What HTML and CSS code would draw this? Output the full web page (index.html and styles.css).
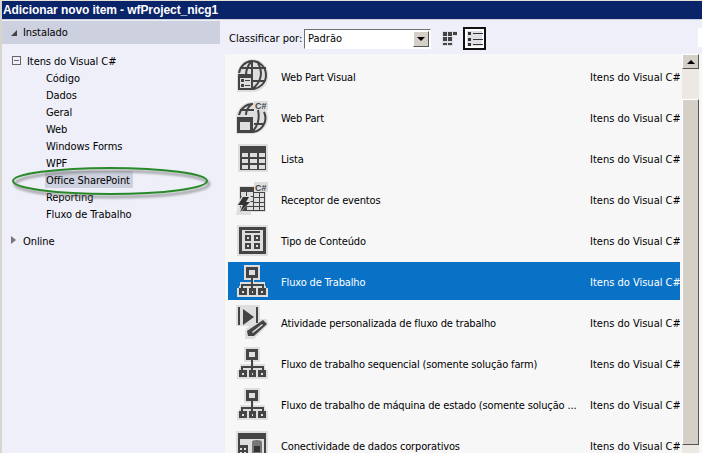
FILE: index.html
```html
<!DOCTYPE html>
<html lang="en">
<head>
    <meta charset="UTF-8">
    <meta name="viewport" content="width=device-width, initial-scale=1.0">
    <title>Adicionar novo item</title>
    <link rel="stylesheet" href="styles.css">
</head>
<body>
    <svg class="defs" width="0" height="0">
        <defs>
            <g id="flow">
                <path d="M10 1h16v15h-6v2h11v4h1v2h2v9H3v-9h2v-2h1v-4h12v-2h-8z" fill="#dedede"/>
                <path d="M12 3h12v11H12zM15 6v5h6V6zM17 14h2v6h-2zM7 20h23v2H7zM7 22h2v2H7zM17 22h2v2h-2zM28 22h2v2h-2zM5 24h8v7H5zM15 24h7v7h-7zM24 24h8v7h-8z" fill="#444" fill-rule="evenodd"/>
                <path d="M8 27h2v2H8zM18 27h1v2h-1zM27 27h2v2h-2z" fill="#dedede"/>
            </g>
        </defs>
    </svg>

    <div class="window">
        <div class="titlebar">Adicionar novo item - wfProject_nicg1</div>
        <div class="panes">
            <aside class="tree">
                <div class="tree-head"><span class="arrow-open"></span>Instalado</div>
                <div class="tree-root"><span class="minus"></span>Itens do Visual C#</div>
                <ul class="tree-items">
                    <li>Código</li>
                    <li>Dados</li>
                    <li>Geral</li>
                    <li>Web</li>
                    <li>Windows Forms</li>
                    <li>WPF</li>
                    <li class="current"><span>Office SharePoint</span></li>
                    <li>Reporting</li>
                    <li>Fluxo de Trabalho</li>
                </ul>
                <div class="tree-online"><span class="arrow-closed"></span>Online</div>
                <svg class="ring" width="204" height="36" viewBox="0 0 204 36">
                    <ellipse class="ring-shadow" cx="100" cy="19" rx="97" ry="13" fill="none" stroke="#666" stroke-opacity=".5" stroke-width="3"/>
                    <ellipse cx="98" cy="16" rx="97" ry="13" fill="none" stroke="#2a8a2a" stroke-width="2"/>
                </svg>
            </aside>
            <main class="content">
                <div class="toolbar">
                    <label class="sort-label">Classificar por:</label>
                    <div class="combo"><span class="combo-text">Padrão</span><span class="combo-btn"></span></div>
                    <svg class="view-icon" width="15" height="15" viewBox="0 0 15 15">
                        <path d="M0 0h15v5h-4v10H0z" fill="#dfdfe6"/>
                        <path d="M1 1h4v4H1zM6 1h4v4H6zM11 1h4v3h-4zM1 6h4v4H1zM6 6h4v4H6zM1 12h4v2H1zM6 12h4v2H6z" fill="#444"/>
                    </svg>
                    <div class="view-active">
                        <svg width="19" height="19" viewBox="0 0 19 19">
                            <path d="M2 2h15v15H2z" fill="#dfdfe6"/>
                            <path d="M3 3h3v3H3zM8 4h10v1H8zM3 9h3v3H3zM8 10h10v1H8zM3 14h3v3H3zM8 15h10v1H8z" fill="#333"/>
                        </svg>
                    </div>
                </div>
                <div class="list-wrap">
                    <div class="list">
                        <div class="row">
                            <svg class="icon" viewBox="0 0 34 34">
                                <path d="M18 0a16.500 16.500 0 1 1 0 33H3V16A16 16 0 0 1 18 0z" fill="#dedede"/>
                                <path d="M18 2a14 14 0 1 1 0 28M5 14A14 14 0 0 1 18 2M6 9h26M18 22h13M18 2c-4 4-6 9-6 14M18 2v20M24 4c5 8 4 19-6 26" fill="none" stroke="#444" stroke-width="2"/>
                                <path d="M4 15h15v16H4z" fill="#444"/>
                                <path d="M6 19h11v10H6z" fill="#dedede"/>
                                <path d="M7 20h3v3H7zM7 25h3v3H7zM11 21h5v1h-5zM11 26h5v1h-5z" fill="#444"/>
                            </svg>
                            <span class="name">Web Part Visual</span><span class="cat">Itens do Visual C#</span>
                        </div>
                        <div class="row">
                            <svg class="icon" viewBox="0 0 34 34">
                                <path d="M18 2a16 16 0 0 1 0 32H2V18A16 16 0 0 1 18 2zM20 1h14v9H20z" fill="#dedede"/>
                                <path d="M30 12a14 14 0 0 1-11 20M5 15A14 14 0 0 1 19 4M6 10h14M20 24h10M18 4c-4 3-6 7-6 11M24 10c2 9 0 16-6 22" fill="none" stroke="#444" stroke-width="2"/>
                                <path d="M3 17h16v16H3z" fill="#444"/>
                                <path d="M6 22h10v8H6z" fill="#dedede"/>
                                <text x="21" y="9" class="csharp">C#</text>
                            </svg>
                            <span class="name">Web Part</span><span class="cat">Itens do Visual C#</span>
                        </div>
                        <div class="row">
                            <svg class="icon" viewBox="0 0 34 34">
                                <path d="M4 3h30v28H4z" fill="#dedede"/>
                                <path d="M6 5h26v24H6z" fill="#444"/>
                                <path d="M8 12h6v4H8zM16 12h7v4h-7zM25 12h6v4h-6zM8 18h6v4H8zM16 18h7v4h-7zM25 18h6v4h-6zM8 24h6v4H8zM16 24h7v4h-7zM25 24h6v4h-6z" fill="#dedede"/>
                            </svg>
                            <span class="name">Lista</span><span class="cat">Itens do Visual C#</span>
                        </div>
                        <div class="row">
                            <svg class="icon" viewBox="0 0 34 34">
                                <path d="M5 4h15V0h14v10h-2v20H17v3H2l3-14z" fill="#dedede"/>
                                <path d="M6 5h14v5h11v19H6z" fill="#444"/>
                                <path d="M7 10h5v4H7zM13 10h6v4h-6zM20 11h5v4h-5zM26 11h4v4h-4zM13 15h6v4h-6zM20 16h5v4h-5zM26 16h4v4h-4zM13 20h6v4h-6zM20 21h5v3h-5zM26 21h4v3h-4zM13 25h6v3h-6zM20 25h5v3h-5zM26 25h4v3h-4z" fill="#dedede"/>
                                <path d="M8 14h9l-3 5h3L4 33l3-9H2z" fill="#dedede"/>
                                <path d="M9 15h6l-3 5h4L6 30l3-7H4z" fill="#333"/>
                                <text x="21" y="9" class="csharp">C#</text>
                            </svg>
                            <span class="name">Receptor de eventos</span><span class="cat">Itens do Visual C#</span>
                        </div>
                        <div class="row">
                            <svg class="icon" viewBox="0 0 34 34">
                                <path d="M3 2h31v31H3z" fill="#dedede"/>
                                <path d="M5 4h27v27H5zM8 7v21h21V7z" fill="#444" fill-rule="evenodd"/>
                                <path d="M11 8h15v2H11zM11 12h6v6h-6zM20 12h6v6h-6zM11 20h6v6h-6zM20 20h6v6h-6z" fill="#444"/>
                                <path d="M13 14h2v2h-2zM22 14h2v2h-2zM13 22h2v2h-2zM22 22h2v2h-2z" fill="#dedede"/>
                            </svg>
                            <span class="name">Tipo de Conteúdo</span><span class="cat">Itens do Visual C#</span>
                        </div>
                        <div class="row selected">
                            <svg class="icon" viewBox="0 0 34 34"><use href="#flow"/></svg>
                            <span class="name">Fluxo de Trabalho</span><span class="cat">Itens do Visual C#</span>
                        </div>
                        <div class="row">
                            <svg class="icon" viewBox="0 0 34 34">
                                <path d="M2 0h24v14h7l1 6-14 14h-9v-9l4-4H2z" fill="#dedede"/>
                                <path d="M4 2h2v18H4zM22 2h2v16h-2zM9 4l11 8-11 8z" fill="#444"/>
                                <path d="M29 15l4 4-13 12h-6l-1-5z" fill="#444"/>
                                <path d="M28 19l1 1-10 8-1-1z" fill="#dedede"/>
                            </svg>
                            <span class="name">Atividade personalizada de fluxo de trabalho</span><span class="cat">Itens do Visual C#</span>
                        </div>
                        <div class="row">
                            <svg class="icon" viewBox="0 0 34 34"><use href="#flow"/></svg>
                            <span class="name">Fluxo de trabalho sequencial (somente solução farm)</span><span class="cat">Itens do Visual C#</span>
                        </div>
                        <div class="row">
                            <svg class="icon" viewBox="0 0 34 34"><use href="#flow"/></svg>
                            <span class="name">Fluxo de trabalho de máquina de estado (somente solução ...</span><span class="cat">Itens do Visual C#</span>
                        </div>
                        <div class="row">
                            <svg class="icon" viewBox="0 0 34 34">
                                <path d="M2 3h32v31H2z" fill="#dedede"/>
                                <path d="M4 5h28v6H4zM4 11h2v6H4zM30 11h2v23h-2z" fill="#444"/>
                                <path d="M4 17h10v17H4z" fill="#444"/>
                                <path d="M6 20h2v2H6zM10 20h2v2h-2zM6 24h2v2H6zM10 24h2v2h-2z" fill="#dedede"/>
                                <path d="M18 14a5 2 0 0 1 10 0v20H18z" fill="#777"/>
                                <path d="M20 18h6v6h-6z" fill="#333"/>
                            </svg>
                            <span class="name">Conectividade de dados corporativos</span><span class="cat">Itens do Visual C#</span>
                        </div>
                    </div>
                    <div class="scrollbar">
                        <div class="scroll-btn"><span class="arrow-up"></span></div>
                        <div class="scroll-gap"></div>
                        <div class="scroll-thumb"></div>
                    </div>
                </div>
            </main>
        </div>
        <div class="corner-patch"></div>
    </div>
</body>
</html>
```

FILE: styles.css
```css
html, body {
    margin: 0;
    height: 100%;
}
body {
    font-family: "DejaVu Sans Condensed", "DejaVu Sans", sans-serif;
    font-stretch: condensed;
    font-size: 11px;
    color: #000;
    background-color: #eeeff8;
    overflow: hidden;
}
.defs {
    display: block;
    height: 0;
}
.window {
    height: 453px;
    border-top: 1px solid #e4e0d4;
    border-left: 2px solid #d8d5cc;
    box-sizing: border-box;
    display: flex;
    flex-direction: column;
    position: relative;
}
.titlebar {
    height: 18px;
    line-height: 18px;
    flex: none;
    background-color: #0a246a;
    color: white;
    font-family: "Liberation Sans", sans-serif;
    font-stretch: normal;
    font-weight: bold;
    font-size: 12px;
    letter-spacing: -0.08px;
    padding-left: 1px;
    border-bottom: 1px solid #cfd2de;
}
.panes {
    flex: 1;
    display: flex;
    min-height: 0;
}

/* left tree */
.tree {
    width: 218px;
    flex: none;
    position: relative;
    letter-spacing: -0.08px;
}
.tree-head {
    margin-top: 1px;
    height: 23px;
    line-height: 24px;
    background-color: #cdd0de;
    padding-left: 21px;
    position: relative;
}
.arrow-open {
    position: absolute;
    left: 9px;
    top: 9px;
    width: 0;
    height: 0;
    border-left: 6px solid transparent;
    border-bottom: 6px solid #444;
}
.tree-root {
    margin-top: 8px;
    height: 17px;
    line-height: 19px;
    padding-left: 25px;
    position: relative;
}
.minus {
    position: absolute;
    left: 10px;
    top: 4px;
    width: 7px;
    height: 7px;
    border: 1px solid #666;
    background: linear-gradient(#666, #666) center / 5px 1px no-repeat;
}
.tree-items {
    list-style: none;
    margin: 0;
    padding: 0 0 0 44px;
}
.tree-items li {
    height: 17px;
    line-height: 19px;
}
.tree-items .current span {
    display: inline-block;
    height: 17px;
    background-color: #cdd0de;
    padding: 0 3px 0 1px;
    margin-left: -1px;
}
.tree-online {
    margin-top: 10px;
    height: 17px;
    line-height: 19px;
    padding-left: 21px;
    position: relative;
}
.arrow-closed {
    position: absolute;
    left: 9px;
    top: 4px;
    width: 0;
    height: 0;
    border-top: 4px solid transparent;
    border-bottom: 4px solid transparent;
    border-left: 5px solid #777;
}
.ring {
    position: absolute;
    left: 10px;
    top: 145px;
}
.ring-shadow {
    filter: blur(1px);
}

/* right side */
.content {
    flex: 1;
    min-width: 0;
    display: flex;
    flex-direction: column;
}
.toolbar {
    height: 34px;
    flex: none;
    display: flex;
    align-items: center;
    padding-left: 9px;
    padding-top: 3px;
    box-sizing: border-box;
}
.sort-label {
    width: 75px;
    white-space: nowrap;
}
.combo {
    width: 127px;
    height: 20px;
    background-color: white;
    border: 1px solid;
    border-color: #6f6f6f #fff #fff #6f6f6f;
    box-sizing: border-box;
    display: flex;
    align-items: center;
    justify-content: space-between;
    padding: 1px;
}
.combo-text {
    padding-left: 2px;
}
.combo-btn {
    width: 16px;
    height: 16px;
    background-color: #d4d0c8;
    border: 1px solid;
    border-color: #fff #555 #555 #fff;
    box-sizing: border-box;
    position: relative;
}
.combo-btn::after {
    content: "";
    position: absolute;
    left: 3px;
    top: 5px;
    border-left: 4px solid transparent;
    border-right: 4px solid transparent;
    border-top: 4px solid black;
}
.view-icon {
    margin-left: 11px;
}
.view-active {
    margin-left: 6px;
    width: 23px;
    height: 23px;
    border: 2px solid #111;
    box-sizing: border-box;
    background-color: white;
    display: flex;
    align-items: center;
    justify-content: center;
}
.list-wrap {
    flex: 1;
    min-height: 0;
    margin-left: 5px;
    display: flex;
    background-color: #f7f7f7;
    overflow: hidden;
}
.list {
    flex: 1;
    min-width: 0;
    padding: 3px 0 0 3px;
}
.row {
    height: 38px;
    margin-bottom: 3px;
    display: flex;
    align-items: center;
}
.row .icon {
    width: 34px;
    height: 34px;
    margin-left: 6px;
    flex: none;
}
.row .name {
    margin-left: 13px;
    padding-top: 2px;
    flex: 1;
    min-width: 0;
    white-space: nowrap;
    letter-spacing: -0.15px;
}
.row .cat {
    width: 90px;
    padding-top: 2px;
    white-space: nowrap;
    flex: none;
    overflow: hidden;
}
.selected {
    background-color: #0a72c6;
    color: white;
}
.csharp {
    font-family: "Liberation Sans", sans-serif;
    font-weight: bold;
    font-size: 9px;
    fill: #444;
}

/* scrollbar */
.scrollbar {
    width: 17px;
    flex: none;
    margin: 0 3px 0 2px;
    background-color: #ece9e3;
    display: flex;
    flex-direction: column;
}
.scroll-btn, .scroll-thumb {
    background-color: #d4d0c8;
    border: 1px solid;
    border-color: #fff #555 #555 #fff;
    box-sizing: border-box;
}
.scroll-btn {
    height: 15px;
    display: flex;
    align-items: center;
    justify-content: center;
}
.arrow-up {
    border-left: 4px solid transparent;
    border-right: 4px solid transparent;
    border-bottom: 4px solid black;
}
.scroll-gap {
    height: 30px;
}
.scroll-thumb {
    height: 346px;
}
.corner-patch {
    position: absolute;
    right: 0;
    top: 27px;
    width: 4px;
    height: 19px;
    background-color: white;
}
```
